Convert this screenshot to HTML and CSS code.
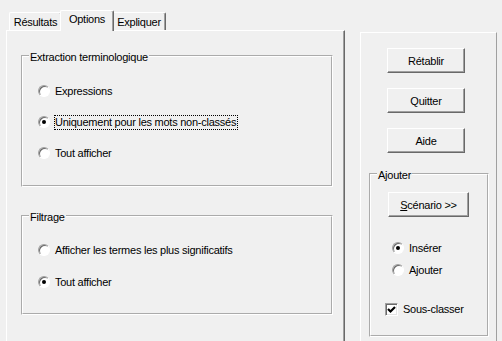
FILE: index.html
```html
<!DOCTYPE html>
<html lang="fr">
  <head>
    <meta charset="UTF-8" />
    <title>Options</title>
    <link rel="stylesheet" href="styles.css">
  </head>
  <body>
    <div class="window">
      <div class="tabs">
        <div class="tab-strip">
          <div class="tab tab-results">Résultats</div>
          <div class="tab tab-active">Options</div>
          <div class="tab tab-explain">Expliquer</div>
        </div>
        <div class="tab-pane">
          <fieldset class="group group-extraction">
            <legend>Extraction terminologique</legend>
            <div class="options">
              <div class="option"><span class="radio"></span><span class="label">Expressions</span></div>
              <div class="option"><span class="radio checked"></span><span class="label focused">Uniquement pour les mots non-classés</span></div>
              <div class="option"><span class="radio"></span><span class="label">Tout afficher</span></div>
            </div>
          </fieldset>
          <fieldset class="group group-filter">
            <legend>Filtrage</legend>
            <div class="options">
              <div class="option"><span class="radio"></span><span class="label">Afficher les termes les plus significatifs</span></div>
              <div class="option"><span class="radio checked"></span><span class="label">Tout afficher</span></div>
            </div>
          </fieldset>
        </div>
      </div>

      <div class="side">
        <button class="button">Rétablir</button>
        <button class="button">Quitter</button>
        <button class="button">Aide</button>
        <fieldset class="group group-add">
          <legend>Ajouter</legend>
          <button class="button button-scenario"><u>S</u>cénario &gt;&gt;</button>
          <div class="option option-insert"><span class="radio checked"></span><span class="label">Insérer</span></div>
          <div class="option option-append"><span class="radio"></span><span class="label">Ajouter</span></div>
          <div class="option option-check">
            <span class="checkbox">
              <svg viewBox="0 0 9 9" width="9" height="9">
                <path d="M1 4 L3.5 6.5 L8 2" stroke="#000" stroke-width="2.2" fill="none" />
              </svg>
            </span>
            <span class="label">Sous-classer</span>
          </div>
        </fieldset>
      </div>
    </div>
  </body>
</html>
```

FILE: styles.css
```css
* {
  box-sizing: border-box;
}

body {
  margin: 0;
  height: 341px;
  overflow: hidden;
  background: #f0f0f0;
  color: #000;
  font-family: "Liberation Sans", Arial, sans-serif;
  font-size: 11px;
  letter-spacing: -0.25px;
}

.window {
  display: flex;
  padding: 10px 0 0 6px;
}

/* tab control */

.tabs {
  width: 339px;
}

.tab-strip {
  display: flex;
  align-items: flex-end;
  height: 20px;
  padding-left: 3px;
}

.tab {
  height: 18px;
  padding-top: 1px;
  line-height: 16px;
  text-align: center;
  border-top: 1px solid #fff;
  border-left: 1px solid #fff;
  border-right: 1px solid #696969;
  border-top-left-radius: 2px;
  border-top-right-radius: 2px;
  box-shadow: inset -1px 0 0 #a0a0a0;
}

.tab-results {
  width: 53px;
}

.tab-explain {
  width: 54px;
}

.tab-active {
  position: relative;
  z-index: 1;
  width: 54px;
  height: 21px;
  margin: 0 -2px -1px;
  padding-top: 0;
  background: #f0f0f0;
}

/* the pane runs on below the window edge, so no bottom border */
.tab-pane {
  height: 311px;
  padding: 18px 0 0 14px;
  border-top: 1px solid #fff;
  border-left: 1px solid #fff;
  border-right: 1px solid #696969;
  box-shadow: inset -1px 0 0 #a0a0a0;
}

/* group boxes */

.group {
  margin: 0;
  padding: 0;
  border: 2px groove #fff;
  min-width: 0;
}

.group legend {
  margin-left: 6px;
  padding: 2px 1px 0;
  line-height: 12px;
}

.group-extraction {
  width: 312px;
  height: 138px;
}

.group-filter {
  width: 312px;
  height: 106px;
  margin-top: 22px;
}

.options {
  display: flex;
  flex-direction: column;
  padding-left: 15px;
}

.group-extraction .options {
  padding-top: 20px;
  gap: 15px;
}

.group-filter .options {
  padding-top: 19px;
  gap: 16px;
}

.option {
  display: flex;
  align-items: center;
  gap: 4px;
  height: 16px;
}

.label {
  padding: 0 1px 1px 0;
  border: 1px solid transparent;
  line-height: 12px;
}

.label.focused {
  border: 1px dotted #000;
}

.radio {
  position: relative;
  flex: none;
  width: 12px;
  height: 12px;
  border-radius: 50%;
  border: 1px solid;
  border-color: #a0a0a0 #fff #fff #a0a0a0;
  background: #fff;
  box-shadow: inset 1px 1px 0 #696969;
}

.radio.checked::after {
  content: "";
  position: absolute;
  left: 3px;
  top: 3px;
  width: 4px;
  height: 4px;
  border-radius: 50%;
  background: #000;
}

.checkbox {
  display: flex;
  align-items: center;
  justify-content: center;
  flex: none;
  width: 13px;
  height: 13px;
  border: 1px solid;
  border-color: #a0a0a0 #fff #fff #a0a0a0;
  background: #fff;
  box-shadow: inset 1px 1px 0 #696969, inset -1px -1px 0 #e3e3e3;
}

/* right column */

.side {
  width: 137px;
  height: 309px;
  margin: 22px 0 0 15px;
  border: 1px solid;
  border-color: #fff #a0a0a0 #a0a0a0 #fff;
  border-bottom: 0;
}

.button {
  display: block;
  width: 78px;
  height: 25px;
  margin: 15px 0 0 26px;
  padding: 0;
  font: inherit;
  letter-spacing: inherit;
  color: #000;
  background: #f0f0f0;
  border: 1px solid;
  border-color: #fff #696969 #696969 #fff;
  box-shadow: inset -1px -1px 0 #a0a0a0;
}

.group-add {
  width: 120px;
  height: 170px;
  margin: 14px 0 0 8px;
}

.button-scenario {
  width: 81px;
  margin: 11px 0 0 17px;
}

.option-insert {
  margin: 23px 0 0 21px;
}

.option-append {
  margin: 6px 0 0 21px;
}

.option-check {
  margin: 23px 0 0 14px;
}
```
